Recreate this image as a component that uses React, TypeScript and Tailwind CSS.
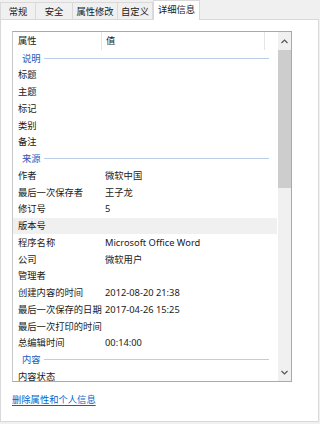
import React from "react";

const FONT = '"Noto Sans", "Noto Sans CJK SC", sans-serif';

type Row =
  | { kind: "section"; label: string }
  | { kind: "row"; label: string; value?: string; hl?: boolean };

const rows: Row[] = [
  { kind: "section", label: "说明" },
  { kind: "row", label: "标题" },
  { kind: "row", label: "主题" },
  { kind: "row", label: "标记" },
  { kind: "row", label: "类别" },
  { kind: "row", label: "备注" },
  { kind: "section", label: "来源" },
  { kind: "row", label: "作者", value: "微软中国" },
  { kind: "row", label: "最后一次保存者", value: "王子龙" },
  { kind: "row", label: "修订号", value: "5" },
  { kind: "row", label: "版本号", hl: true },
  { kind: "row", label: "程序名称", value: "Microsoft Office Word" },
  { kind: "row", label: "公司", value: "微软用户" },
  { kind: "row", label: "管理者" },
  { kind: "row", label: "创建内容的时间", value: "2012-08-20 21:38" },
  { kind: "row", label: "最后一次保存的日期", value: "2017-04-26 15:25" },
  { kind: "row", label: "最后一次打印的时间" },
  { kind: "row", label: "总编辑时间", value: "00:14:00" },
  { kind: "section", label: "内容" },
  { kind: "row", label: "内容状态" },
];

const tabs = ["常规", "安全", "属性修改", "自定义"];
const tabW = ["w-[36px]", "w-[37px]", "w-[45px]", "w-[35px]"];

export default function App() {
  return (
    <div
      className="w-[320px] h-[424px] bg-[#f0f0f0] overflow-hidden text-[#1a1a1a]"
      style={{ fontFamily: FONT }}
    >
      {/* tabs */}
      <div className="flex h-[19px] items-end">
        {tabs.map((t, i) => (
          <div
            key={t}
            className={`${tabW[i]} h-[17px] flex items-center justify-center pt-px border-t border-r border-[#d9d9d9] ${i === 0 ? "border-l" : ""} bg-[#f0f0f0] text-[9.3px] leading-none`}
          >
            {t}
          </div>
        ))}
        <div className="w-[47px] h-[20px] -mb-px relative z-10 flex items-start justify-center pt-[4px] bg-white border-t border-l border-r border-[#d9d9d9] text-[9.3px] leading-none">
          详细信息
        </div>
      </div>
      {/* panel */}
      <div className="w-[319px] h-[403px] bg-white border border-[#d9d9d9] flex flex-col">
        <div className="ml-[11px] mt-[11px] w-[280px] h-[351px] border border-[#a9a9a9] border-l-[#c8c8c8] flex overflow-hidden">
          <div className="w-[264px] flex flex-col">
            {/* header */}
            <div className="h-[18px] flex items-center text-[9.3px] leading-none shrink-0">
              <div className="w-[88px] pl-[5px] h-full flex items-center">属性</div>
              <div className="w-px h-full bg-[#e5e5e5]" />
              <div className="w-[162px] pl-[4px] h-full flex items-center">值</div>
              <div className="w-px h-full bg-[#e5e5e5]" />
            </div>
            {rows.map((r, i) =>
              r.kind === "section" ? (
                <div key={i} className="h-[16.75px] shrink-0 flex items-center pl-[9px] text-[9.3px] leading-none">
                  <span className="text-[#2457b8]">{r.label}</span>
                  <div className="ml-[3px] w-[225px] h-px bg-[#bccde9]" />
                </div>
              ) : (
                <div
                  key={i}
                  className={`h-[16.75px] shrink-0 grid grid-cols-[92px_1fr] items-center text-[9.3px] leading-none ${r.hl ? "bg-[#f0f0f0]" : ""}`}
                >
                  <div className="pl-[5px] whitespace-nowrap">{r.label}</div>
                  <div className="whitespace-nowrap">{r.value ?? ""}</div>
                </div>
              )
            )}
          </div>
          {/* scrollbar */}
          <div className="ml-auto w-[13px] h-full bg-[#f0f0f0] flex flex-col items-stretch">
            <div className="h-[18px] flex items-center justify-center">
              <svg width="7" height="5" viewBox="0 0 7 5">
                <path d="M0.5 4 L3.5 1 L6.5 4" fill="none" stroke="#555" strokeWidth="1.2" />
              </svg>
            </div>
            <div className="h-[138px] bg-[#cdcdcd]" />
            <div className="flex-1" />
            <div className="h-[17px] flex items-center justify-center">
              <svg width="7" height="5" viewBox="0 0 7 5">
                <path d="M0.5 1 L3.5 4 L6.5 1" fill="none" stroke="#555" strokeWidth="1.2" />
              </svg>
            </div>
          </div>
        </div>
        <div className="ml-[11px] mt-[13px] text-[9.3px] leading-none">
          <span className="text-[#0066cc] underline underline-offset-2">删除属性和个人信息</span>
        </div>
      </div>
    </div>
  );
}
